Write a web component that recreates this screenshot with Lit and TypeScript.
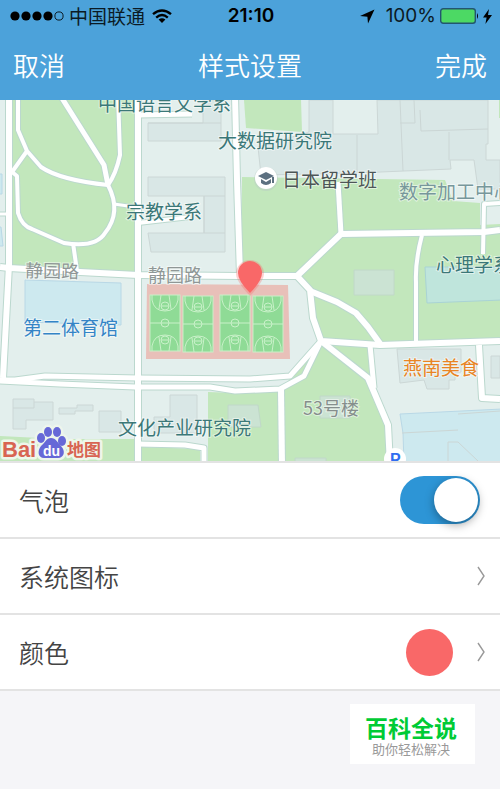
import { LitElement, html, svg, css } from "lit";
import { customElement, property, state } from "lit/decorators.js";

type Road = { d: string; w: number };

const ROADS: Road[] = [
  { d: "M9 95V265L3 378", w: 6 },
  { d: "M0 214H8", w: 3 },
  { d: "M0 267L9 268L80 272L138 275L240 276H297", w: 6 },
  { d: "M138 95V465", w: 6 },
  { d: "M138 115L192 114", w: 5 },
  { d: "M138 223L190 217", w: 4 },
  { d: "M235 95L237 180L240 276", w: 6 },
  { d: "M297 276L341 234L484 232L500 230", w: 6 },
  { d: "M338 182L341 234", w: 5 },
  { d: "M422 235Q415 262 416 282V343", w: 4 },
  { d: "M500 203L484 204L483 254", w: 4 },
  { d: "M297 276L310 290L313 318L321 341L380 345L500 341", w: 6 },
  { d: "M310 291L337 302L356 313L368 327L381 345", w: 6 },
  { d: "M321 341L368 378L388 425L390 465", w: 6 },
  { d: "M370 345L374 388", w: 5 },
  { d: "M321 341L290 376L250 379L138 378L45 376L15 380H0", w: 5 },
  { d: "M0 381L60 384L135 387H210L235 391L280 389L304 376L321 341", w: 5 },
  { d: "M281 389L282 465", w: 6 },
  { d: "M138 444L185 445L204 448V465", w: 5 },
  { d: "M479 345L482 398L500 399", w: 6 },
  { d: "M18 95V130L27 151L41 167Q60 180 108 185", w: 4 },
  { d: "M27 151L12 172L17 176L18 213Q22 226 32 229L64 243Q96 248 105 233Q122 212 108 185", w: 4 },
  { d: "M60 95L104 165L108 185", w: 5 },
  { d: "M118 95L120 155Q116 174 108 185", w: 4 },
  { d: "M114 204L135 207", w: 3 },
  { d: "M73 243L77 271", w: 4 },
];

const GREENS = [
  "M12 100H135V272L12 267Z",
  "M244 100H301L302 132L246 128Z",
  "M242 177L378 179L445 180L453 201L480 203V225L500 224V341L380 343L322 341L311 318L308 292L297 277L241 275Z",
  "M321 341L380 344L371 346L375 390L390 425V461H208V392L235 393L280 391Z",
  "M0 436L60 439H135V461H0Z",
  "M142 447L200 449V461H142Z",
  "M499 100H500V118H499Z",
];

const BUILDINGS = [
  "M148 123H203V100H221V141H148Z",
  "M148 177H225V252H151L148 233H204V196H148Z",
  "M309 100H333V134H378L377 100H488V144H486V160H500V189H478L474 160H450L451 169L404 171L357 173L261 175L258 147L309 132Z",
  "M13 399H34V402H53V420H26V429H13Z",
  "M59 408H77V405H93V411H75V414H59Z",
  "M99 411H121V432H99Z",
  "M170 395H197V433H154V417H170Z",
  "M397 349H461V372L455 373V380H449V389H427L424 380L400 383Z",
  "M491 356H500V378H491Z",
];

const PARK_BUILDINGS = [
  "M354 270H394V295H354Z",
  "M320 396H350V418H320Z",
  "M228 405H258L261 427H228Z",
  "M295 458H326V462H295Z",
];

const PARTITIONS =
  "M148 123H221M204 196H225M204 196V233H225M357 135V173M400 100L403 171M400 123H415L414 100M420 110L421 131L488 129M449 132V160M13 408H34V402M402 433L458 430M458 414L500 411M448 461V442H458L478 461";

type Label = { t: string; x: number; y: number; s: number; c: string; turn?: number };

const LABELS: Label[] = [
  { t: "中国语言文学系", x: 98, y: 111, s: 19, c: "dept" },
  { t: "大数据研究院", x: 218, y: 148, s: 19, c: "dept" },
  { t: "宗教学系", x: 126, y: 219, s: 19, c: "dept" },
  { t: "日本留学班", x: 282, y: 187, s: 19, c: "school" },
  { t: "数字加工中心", x: 399, y: 199, s: 19, c: "office" },
  { t: "心理学系", x: 436, y: 272, s: 19, c: "dept" },
  { t: "静园路", x: 25, y: 277, s: 18, c: "street", turn: 1 },
  { t: "静园路", x: 148, y: 282, s: 18, c: "street" },
  { t: "第二体育馆", x: 23, y: 335, s: 19, c: "gym" },
  { t: "燕南美食", x: 403, y: 375, s: 19, c: "food" },
  { t: "53号楼", x: 303, y: 415, s: 18, c: "house" },
  { t: "文化产业研究院", x: 118, y: 435, s: 19, c: "dept" },
];

const COURTS = [
  { x: 150, y: 295 },
  { x: 183, y: 296 },
  { x: 220, y: 295 },
  { x: 253, y: 296 },
];

@customElement("campus-map")
export class CampusMap extends LitElement {
  @property() color = "#f96868";

  static styles = css`
    :host { display: block; background: #e3efed; }
    .map { display: block; width: 100%; height: auto; font-family: "Noto Sans CJK SC", sans-serif; }
    .green { fill: #c2e7bc; }
    .building { fill: #d9e7e6; stroke: #ccd7d6; stroke-width: 1; }
    .park-building { fill: #cbe3d3; stroke: #c0d8c8; stroke-width: 1; }
    .partition { fill: none; stroke: #cbd6d5; stroke-width: 1; }
    .water { fill: #cde9ef; stroke: #b9d8e6; stroke-width: 1; }
    .pond { fill: #bfe5dc; stroke: #a9d3d5; stroke-width: 1; }
    .casing { fill: none; stroke: #bbd8ce; stroke-linejoin: round; }
    .road { fill: none; stroke: #fff; stroke-linejoin: round; }
    .yard { fill: #e8c0b9; }
    .court { fill: #8fdb96; stroke: #c9efc8; stroke-width: 1; }
    .lines { fill: none; stroke: #c9f1c9; stroke-width: 1; }
    .label { paint-order: stroke; stroke: #ffffff; stroke-opacity: 0.5; stroke-width: 2; }
    .dept { fill: #3b7878; }
    .school { fill: #4d5656; }
    .office { fill: #77979b; }
    .street { fill: #8f9796; }
    .house { fill: #858e8c; }
    .gym { fill: #3484c6; }
    .food { fill: #e98423; }
    .brand { fill: #d86452; font-weight: 700; paint-order: stroke; stroke: #eef6ea; stroke-width: 5; stroke-linejoin: round; }
    .latin { font-family: "Liberation Sans", sans-serif; }
    .paw { fill: #6668d7; }
    .paw-halo { fill: #edf5ec; stroke: #edf5ec; stroke-width: 5; }
    .du { fill: #fff; font: 700 14px "Liberation Sans", sans-serif; }
    .parking { fill: #2f6df0; font: 700 16px "Liberation Sans", sans-serif; }
  `;

  private court(c: { x: number; y: number }) {
    return svg`<g transform="translate(${c.x} ${c.y})">
      <rect class="court" width="30" height="56"></rect>
      <path class="lines" d="M0 28H30M2 0V5Q4 16 15 16Q26 16 28 5V0M2 56V51Q4 40 15 40Q26 40 28 51V56M11 0L9 14M19 0L21 14M11 56L9 42M19 56L21 42M11 11H19M11 45H19"></path>
      <circle class="lines" cx="15" cy="28" r="4"></circle>
      <circle class="lines" cx="15" cy="11" r="4"></circle>
      <circle class="lines" cx="15" cy="45" r="4"></circle>
    </g>`;
  }

  render() {
    const paw = () => svg`
      <ellipse cx="41" cy="438" rx="4" ry="5"></ellipse>
      <ellipse cx="48" cy="432" rx="4" ry="5"></ellipse>
      <ellipse cx="57" cy="432" rx="4" ry="5"></ellipse>
      <ellipse cx="62" cy="441" rx="4" ry="5"></ellipse>
      <path d="M51 438C56 438 58 443 61 446C66 451 64 458 58 458H44C38 458 37 451 41 446C45 443 46 438 51 438Z"></path>`;
    return html`<svg class="map" viewBox="0 100 500 361" role="img" aria-label="地图">
      ${GREENS.map((d) => svg`<path class="green" d=${d}></path>`)}
      ${BUILDINGS.map((d) => svg`<path class="building" d=${d}></path>`)}
      ${PARK_BUILDINGS.map((d) => svg`<path class="park-building" d=${d}></path>`)}
      <path class="water" d="M25 280L121 283V325L25 322ZM-2 174H2V194H-2ZM-2 227H1L3 246H-2ZM400 414L502 409V463H404L403 433Z"></path>
      <path class="pond" d="M425 267H502V300L427 303Z"></path>
      <path class="partition" d=${PARTITIONS}></path>
      ${ROADS.map((r) => svg`<path class="casing" d=${r.d} stroke-width=${r.w + 2}></path>`)}
      ${ROADS.map((r) => svg`<path class="road" d=${r.d} stroke-width=${r.w}></path>`)}
      <path class="yard" d="M147 284L288 285L290 359H146Z"></path>
      ${COURTS.map((c) => this.court(c))}
      ${LABELS.map(
        (l) => svg`<text class="label ${l.c}" x=${l.x} y=${l.y} font-size=${l.s}
          transform="rotate(${l.turn ?? 0} ${l.x} ${l.y})">${l.t}</text>`
      )}
      <circle cx="266" cy="179" r="12" fill="#b9cdc5" opacity="0.5"></circle>
      <circle cx="266" cy="178" r="11" fill="#fff"></circle>
      <path fill="#5c7080" d="M266 172L274 176L266 180L258 176ZM261 179L266 182L271 179V183Q266 187 261 183ZM272 177H274V183H272Z"></path>
      <circle cx="395" cy="459" r="11" fill="#fff"></circle>
      <text class="parking" x="390" y="465">P</text>
      <path fill="#f96868" opacity="0.3" d="M250 296Q236 281 236 274A14 14 0 0 1 264 274Q264 281 250 296Z"></path>
      <path fill=${this.color} d="M250 293Q238 281 238 273A12 12 0 0 1 262 273Q262 281 250 293Z"></path>
      <g class="paw-halo">${paw()}</g>
      <text class="brand latin" x="2" y="457" font-size="22">Bai</text>
      <text class="brand" x="67" y="456" font-size="17">地图</text>
      <g class="paw">${paw()}</g>
      <text class="du" x="43" y="456">du</text>
    </svg>`;
  }
}

@customElement("status-bar")
export class StatusBar extends LitElement {
  static styles = css`
    :host {
      display: grid; grid-template-columns: 1fr auto 1fr; align-items: center;
      height: 32px; padding: 0 8px 0 10px; color: #0b1a24;
      font: 19px/32px Inter, "Noto Sans CJK SC", sans-serif;
    }
    .side { display: flex; align-items: center; gap: 7px; }
    .end { justify-content: flex-end; gap: 4px; }
    .time { font-weight: 600; color: #000; }
    .carrier { margin-left: -2px; font-family: "Noto Sans CJK SC", sans-serif; }
    .icon { display: block; flex: none; }
    .arrow { margin-right: 7px; }
  `;

  render() {
    return html`
      <div class="side">
        <svg class="icon" width="54" height="10" viewBox="0 0 54 10" aria-hidden="true">
          ${[5, 16, 27, 38].map((x) => svg`<circle cx=${x} cy="5" r="4.6"></circle>`)}
          <circle cx="49" cy="5" r="4.1" fill="none" stroke="#0b1a24"></circle>
        </svg>
        <span class="carrier">中国联通</span>
        <svg class="icon" width="20" height="14" viewBox="0 0 20 14" fill="none" stroke="#000" stroke-width="2.4" aria-hidden="true">
          <path d="M1 5.2Q10 -2.4 19 5.2M4.2 8.6Q10 3.6 15.8 8.6"></path>
          <path fill="#000" stroke="none" d="M6.6 10.6Q10 7.8 13.4 10.6L10 14Z"></path>
        </svg>
      </div>
      <span class="time">21:10</span>
      <div class="side end">
        <svg class="icon arrow" width="15" height="15" viewBox="0 0 15 15" aria-hidden="true">
          <path d="M14.5 0.5L8 14.5L7.4 7.8L0 7Z"></path>
        </svg>
        <span>100%</span>
        <svg class="icon" width="39" height="16" viewBox="0 0 39 16" aria-hidden="true">
          <rect x="0.7" y="0.7" width="34.6" height="14.6" rx="2.5" fill="#4cd964" stroke="#23566f" stroke-width="1.4"></rect>
          <path d="M37 5Q39 8 37 11Z"></path>
        </svg>
        <svg class="icon" width="9" height="15" viewBox="0 0 9 15" aria-hidden="true">
          <path d="M6 0L0 8.5H3.6L2.4 15L9 6H5Z"></path>
        </svg>
      </div>
    `;
  }
}

@customElement("app-root")
export class AppRoot extends LitElement {
  @state() private bubble = true;

  static styles = css`
    :host {
      display: flex; flex-direction: column; min-height: 100vh; background: #f5f5f8;
      font-family: "Noto Sans CJK SC", sans-serif; color: #444;
    }
    .top { background: #4ca2da; }
    .nav {
      display: grid; grid-template-columns: 1fr auto 1fr; align-items: center;
      height: 66px; padding: 0 13px 2px;
    }
    .title, .action { margin: 0; font: 350 26px/38px "Noto Sans CJK SC", sans-serif; color: #fff; }
    button { border: 0; padding: 0; background: none; cursor: pointer; }
    .action { justify-self: start; }
    .done { justify-self: end; }
    .list { border-top: 2px solid #e3e3e3; background: #fff; }
    .row {
      display: flex; align-items: center; justify-content: space-between;
      width: 100%; height: 76px; box-sizing: border-box; padding: 0 15px 0 19px;
      border-bottom: 2px solid #e3e3e3; color: #444;
      font: 350 25px/36px "Noto Sans CJK SC", sans-serif;
    }
    .switch-row { padding-right: 20px; }
    .value { display: flex; align-items: center; gap: 24px; }
    .swatch { width: 47px; height: 47px; border-radius: 50%; background: #f96868; }
    .chevron { display: block; }
    .switch {
      appearance: none; display: flex; align-items: center; box-sizing: border-box;
      width: 80px; height: 48px; margin: 0; padding: 2px; border-radius: 24px;
      background: #c8c8cc; cursor: pointer;
    }
    .switch::before {
      content: ""; width: 44px; height: 44px; border-radius: 50%; background: #fff;
      box-shadow: 0 3px 10px rgba(0, 0, 0, 0.35);
    }
    .switch:checked { justify-content: flex-end; background: #2d95d6; }
    .foot { display: flex; justify-content: flex-end; padding: 13px 25px; }
    .card { width: 125px; height: 60px; box-sizing: border-box; padding: 8px 3px 0 0; background: #fff; text-align: center; }
    .name { margin: 0; font-size: 23px; line-height: 30px; font-weight: 700; color: #00cb35; }
    .motto { margin: 0; font-size: 13px; line-height: 14px; color: #999; }
  `;

  private chevron() {
    return html`<svg class="chevron" width="8" height="20" viewBox="0 0 8 20" fill="none" stroke="#999" stroke-width="1.4" aria-hidden="true">
      <path d="M1 1L7 10L1 19"></path>
    </svg>`;
  }

  render() {
    return html`
      <header class="top">
        <status-bar></status-bar>
        <nav class="nav">
          <button class="action">取消</button>
          <h1 class="title">样式设置</h1>
          <button class="action done">完成</button>
        </nav>
      </header>
      <campus-map></campus-map>
      <main class="list">
        <div class="row switch-row">
          <label for="bubble">气泡</label>
          <input id="bubble" class="switch" type="checkbox" role="switch" .checked=${this.bubble}
            @change=${(e: Event) => (this.bubble = (e.target as HTMLInputElement).checked)} />
        </div>
        <button class="row">
          <span>系统图标</span>
          ${this.chevron()}
        </button>
        <button class="row">
          <span>颜色</span>
          <span class="value"><span class="swatch"></span>${this.chevron()}</span>
        </button>
      </main>
      <footer class="foot">
        <div class="card">
          <p class="name">百科全说</p>
          <p class="motto">助你轻松解决</p>
        </div>
      </footer>
    `;
  }
}
